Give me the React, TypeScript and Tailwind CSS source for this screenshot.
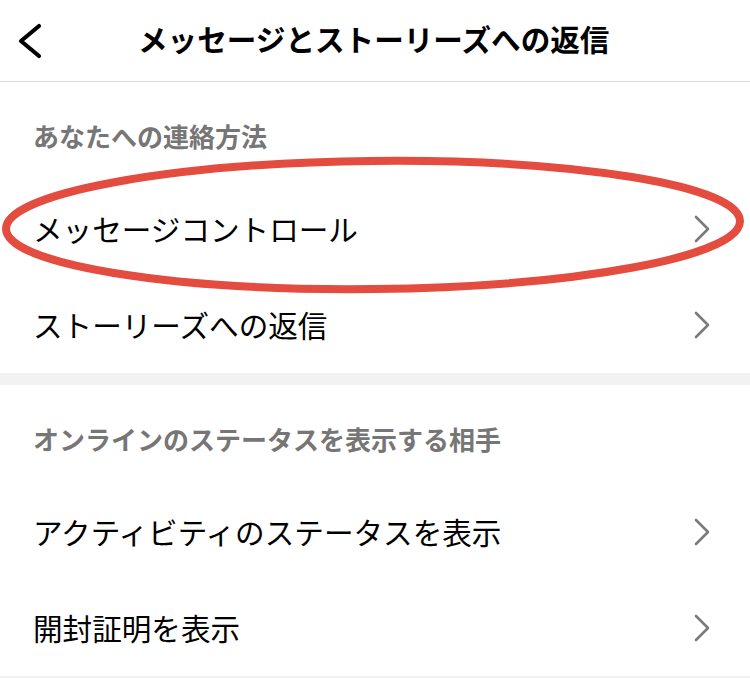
import { ReactNode } from 'react'

const font = { fontFamily: '"Noto Sans CJK JP", "Noto Sans", sans-serif' }

function Chevron() {
  return (
    <svg width="20" height="30" viewBox="0 0 20 30" className="shrink-0">
      <path d="M4 3 L16 15 L4 27" fill="none" stroke="#7a7a7a" strokeWidth="2.6" strokeLinecap="round" strokeLinejoin="round" />
    </svg>
  )
}

function SectionTitle({ children }: { children: ReactNode }) {
  return (
    <div className="h-[99px] pl-[33px] pt-[36px]">
      <p className="text-[26px] leading-[36px] font-bold text-[#767676]">{children}</p>
    </div>
  )
}

function Row({ label }: { label: string }) {
  return (
    <div className="h-[96px] flex items-center justify-between pl-[33px] pr-[38px]">
      <span className="text-[29.6px] leading-[40px] text-black">{label}</span>
      <Chevron />
    </div>
  )
}

export default function App() {
  return (
    <div className="relative w-[750px] h-[678px] overflow-hidden bg-white" style={font}>
      {/* Header */}
      <header className="h-[82px] flex items-center border-b border-[#dcdcdc] relative">
        <div className="w-[138px] pl-[14px] flex items-center">
          <svg width="30" height="36" viewBox="0 0 30 36">
            <path d="M25 3 L7 18 L25 33" fill="none" stroke="#000" strokeWidth="4.2" strokeLinecap="round" strokeLinejoin="round" />
          </svg>
        </div>
        <h1 className="text-[29.6px] leading-[40px] font-bold text-black -mt-[4px]">メッセージとストーリーズへの返信</h1>
      </header>

      {/* あなたへの連絡方法 */}
      <section>
        <SectionTitle>あなたへの連絡方法</SectionTitle>
        <Row label="メッセージコントロール" />
        <Row label="ストーリーズへの返信" />
      </section>

      <div className="h-[12px] bg-[#f2f2f2]" />

      {/* オンラインのステータス */}
      <section>
        <SectionTitle>オンラインのステータスを表示する相手</SectionTitle>
        <Row label="アクティビティのステータスを表示" />
        <Row label="開封証明を表示" />
      </section>

      <div className="h-[12px] bg-[#f2f2f2]" />

      {/* red annotation */}
      <svg className="absolute left-0 top-0 pointer-events-none" width="750" height="678" viewBox="0 0 750 678">
        <ellipse cx="373" cy="225" rx="367" ry="64" fill="none" stroke="#e34c3e" strokeWidth="8" transform="rotate(-0.6 373 225)" />
      </svg>
    </div>
  )
}
